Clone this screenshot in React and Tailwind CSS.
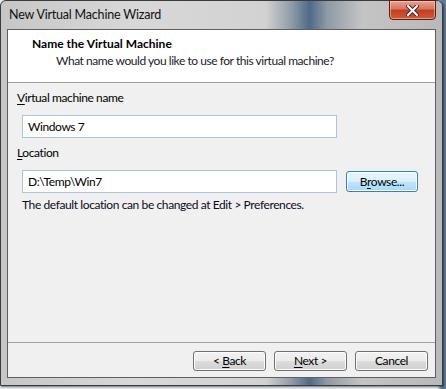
import React from "react";

const Mn = ({ children }) => <span className="underline underline-offset-[2px]">{children}</span>;

const WinButton = ({ children, primary }) => (
  <button
    className={
      primary
        ? "h-[21px] w-[72px] rounded-[3px] border border-[#3c7fb1] bg-[linear-gradient(to_bottom,#eaf6fd_0%,#d9f0fc_50%,#bee6fd_51%,#a7d9f5_100%)] text-[12px] leading-[19px] text-black shadow-[inset_0_0_0_1px_#fbfdff]"
        : "h-[20px] w-[73px] rounded-[3px] border border-[#707070] bg-[linear-gradient(to_bottom,#f2f2f2_0%,#ebebeb_50%,#dddddd_51%,#cfcfcf_100%)] text-[12px] leading-[18px] text-black shadow-[inset_0_0_0_1px_#fcfcfc]"
    }
  >
    {children}
  </button>
);

export default function App() {
  return (
    <div className="w-[446px] h-[389px] bg-[linear-gradient(to_right,#e4ebf0_0%,#e4ebf0_98%,#5d7d9b_99%)] font-['Lato',sans-serif] text-[12px] tracking-[-0.4px] text-black">
      <div className="flex h-[386px] w-[443px] flex-col rounded-t-[6px] border border-[#3b3b3b] bg-[linear-gradient(to_right,#c6c6c6_0%,#d8d8d8_30%,#d2d2d2_60%,#8e9aa6_66%,#4f6b88_70%,#8f9aa5_74%,#c4c4c4_82%,#b9b9b9_100%)] shadow-[1px_1px_2px_rgba(0,0,0,0.5)]">
        {/* title bar */}
        <div className="relative h-[28px] shrink-0">
          <div className="pl-[8px] pt-[5px] text-[12.5px] leading-[18px] tracking-[-0.2px] text-[#111]">New Virtual Machine Wizard</div>
          <div className="absolute right-[6px] top-[-1px] flex h-[20px] w-[47px] items-center justify-center rounded-b-[4px] border border-[#5a1e14] bg-[linear-gradient(to_bottom,#e8a393_0%,#d5745f_45%,#c43c22_50%,#cf5a3a_100%)] shadow-[inset_0_0_0_1px_rgba(255,220,210,0.5)]">
            <svg width="13" height="11" viewBox="0 0 13 11">
              <path d="M2 1 L11 10 M11 1 L2 10" stroke="#3a2a2a" strokeWidth="4" strokeLinecap="square" />
              <path d="M2 1 L11 10 M11 1 L2 10" stroke="#ffffff" strokeWidth="2" strokeLinecap="square" />
            </svg>
          </div>
        </div>

        {/* client area */}
        <div className="mx-[6px] flex h-[349px] flex-col border border-[#5e5e5e] bg-[#f0f0f0]">
          <div className="h-[53px] shrink-0 border-b border-[#a0a0a0] bg-white">
            <div className="pl-[24px] pt-[6px] text-[12px] font-bold leading-[16px] tracking-normal">Name the Virtual Machine</div>
            <div className="pl-[48px] pt-[1px] text-[12px] leading-[16px] tracking-[-0.45px] text-[#1b1b2b]">
              What name would you like to use for this virtual machine?
            </div>
          </div>

          <div className="flex flex-1 flex-col pl-[9px] pt-[7px]">
            <div className="leading-[16px]">
              <Mn>V</Mn>irtual machine name
            </div>
            <div className="mt-[9px] ml-[5px] flex h-[23px] w-[315px] items-center border border-[#a9c5e0] bg-white pl-[5px] leading-[16px]">
              Windows 7
            </div>
            <div className="mt-[7px] leading-[16px]">
              <Mn>L</Mn>ocation
            </div>
            <div className="mt-[9px] ml-[5px] flex items-center gap-[9px]">
              <div className="flex h-[23px] w-[315px] items-center border border-[#a9c5e0] bg-white pl-[5px] leading-[16px]">
                D:\Temp\Win7
              </div>
              <WinButton primary>
                B<Mn>r</Mn>owse...
              </WinButton>
            </div>
            <div className="mt-[4px] ml-[5px] leading-[16px] text-[#0c0c1c]">
              The default location can be changed at Edit &gt; Preferences.
            </div>
          </div>

          <div className="flex h-[35px] shrink-0 justify-end gap-[8px] border-t border-[#a0a0a0] pr-[7px] pt-[8px]">
            <WinButton>
              &lt; <Mn>B</Mn>ack
            </WinButton>
            <WinButton>
              <Mn>N</Mn>ext &gt;
            </WinButton>
            <WinButton>Cancel</WinButton>
          </div>
        </div>
      </div>
    </div>
  );
}
